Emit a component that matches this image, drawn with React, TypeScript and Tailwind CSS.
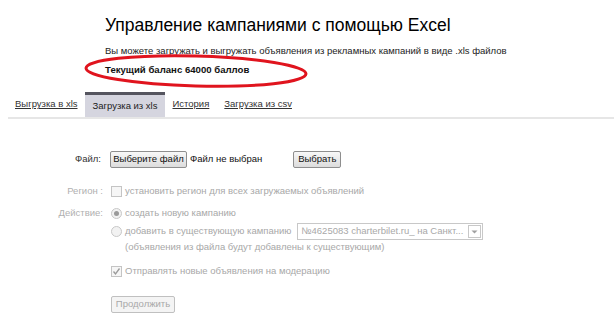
import React from "react";

const Checkbox = ({ checked }: { checked?: boolean }) => (
  <span className="w-[11px] h-[11px] border border-[#c4c4c4] bg-[#f6f6f6] flex items-center justify-center shrink-0">
    {checked && (
      <svg width="9" height="9" viewBox="0 0 9 9">
        <path d="M1.5 4.5 L3.5 7 L7.5 1.5" fill="none" stroke="#9a9a9a" strokeWidth="1.3" />
      </svg>
    )}
  </span>
);

const Radio = ({ checked }: { checked?: boolean }) => (
  <span className="w-[11px] h-[11px] rounded-full border border-[#c8c8c8] bg-[#f2f2f2] flex items-center justify-center shrink-0">
    {checked && <span className="w-[5px] h-[5px] rounded-full bg-[#9a9a9a]" />}
  </span>
);

const App = () => {
  return (
    <div
      className="relative w-[614px] h-[335px] bg-white overflow-hidden text-[#222]"
      style={{ fontFamily: '"Liberation Sans", Arial, sans-serif' }}
    >
      {/* Header */}
      <div className="pl-[105px] pt-[13px]">
        <h1 className="text-[17.5px] leading-[24px] text-black">
          Управление кампаниями с помощью Excel
        </h1>
        <p className="text-[9.5px] leading-[13px] mt-[7px] text-[#222]">
          Вы можете загружать и выгружать объявления из рекламных кампаний в виде .xls файлов
        </p>
        <p className="text-[9.6px] leading-[13px] mt-[6px] font-bold text-[#111]">
          Текущий баланс 64000 баллов
        </p>
      </div>

      {/* Red highlight */}
      <svg className="absolute left-[83px] top-[52px]" width="226" height="40" viewBox="0 0 226 40">
        <ellipse cx="113" cy="19" rx="110" ry="15" fill="none" stroke="#e0141e" strokeWidth="3" transform="rotate(1.5 113 19)" />
      </svg>

      {/* Tabs */}
      <div className="ml-[8px] mt-[16px] pl-[7px] flex items-stretch border-b-2 border-[#e6e6e6] h-[27px] text-[9.5px]">
        <div className="flex items-center">
          <span className="underline text-[#333]">Выгрузка в xls</span>
        </div>
        <div className="ml-[7px] px-[8px] bg-[#d5d5df] border-t-[3px] border-[#55555f] flex items-center text-[#222]">
          Загрузка из xls
        </div>
        <div className="ml-[7px] flex items-center">
          <span className="underline text-[#333]">История</span>
        </div>
        <div className="ml-[15px] flex items-center">
          <span className="underline text-[#333]">Загрузка из csv</span>
        </div>
      </div>

      {/* Form */}
      <div className="mt-[31px] grid grid-cols-[104px_1fr] text-[9.5px]">
        <div className="flex items-center justify-end pr-[3px] h-[18px] text-[#333]">Файл:</div>
        <div className="flex items-center h-[18px] pl-[6px]">
          <button className="h-[17px] w-[77px] border border-[#8e8e8e] rounded-[2px] bg-gradient-to-b from-[#f8f8f8] to-[#dcdcdc] text-[9.5px] text-[#111]">
            Выберите файл
          </button>
          <span className="ml-[3px] text-[#111]">Файл не выбран</span>
          <button className="ml-[31px] h-[17px] w-[48px] border border-[#8e8e8e] rounded-[2px] bg-gradient-to-b from-[#f8f8f8] to-[#dcdcdc] text-[9.5px] text-[#111]">
            Выбрать
          </button>
        </div>

        <div className="mt-[15px] flex items-center justify-end pr-[1px] h-[16px] text-[#b0b0b0]">Регион :</div>
        <div className="mt-[15px] flex items-center gap-[3px] h-[16px] pl-[7px] text-[#a8a8a8]">
          <Checkbox />
          <span>установить регион для всех загружаемых объявлений</span>
        </div>

        <div className="mt-[6px] flex items-center justify-end pr-[1px] h-[16px] text-[#b0b0b0]">Действие:</div>
        <div className="mt-[6px] flex items-center gap-[3px] h-[16px] pl-[7px] text-[#a8a8a8]">
          <Radio checked />
          <span>создать новую кампанию</span>
        </div>

        <div />
        <div className="mt-[2px] flex items-center gap-[3px] h-[17px] pl-[7px] text-[#a8a8a8]">
          <Radio />
          <span>добавить в существующую кампанию</span>
          <div className="ml-[3px] w-[186px] h-[17px] border border-[#c8c8c8] flex items-center text-[#a8a8a8]">
            <span className="flex-1 pl-[3px] whitespace-nowrap overflow-hidden">
              №4625083 charterbilet.ru_ на Санкт...
            </span>
            <span className="w-[13px] h-[13px] mr-[1px] border border-[#c8c8c8] flex items-center justify-center">
              <svg width="7" height="4" viewBox="0 0 7 4">
                <path d="M0.5 0.5 L3.5 3.5 L6.5 0.5Z" fill="#a0a0a0" />
              </svg>
            </span>
          </div>
        </div>

        <div />
        <div className="h-[15px] pl-[21px] flex items-center text-[#a8a8a8]">
          (объявления из файла будут добавлены к существующим)
        </div>

        <div />
        <div className="mt-[8px] flex items-center gap-[3px] h-[16px] pl-[7px] text-[#a8a8a8]">
          <Checkbox checked />
          <span>Отправлять новые объявления на модерацию</span>
        </div>

        <div />
        <div className="mt-[17px] pl-[7px]">
          <button className="h-[17px] w-[64px] border border-[#c0c0c0] rounded-[2px] bg-[#f4f4f4] text-[9.5px] text-[#a8a8a8]">
            Продолжить
          </button>
        </div>
      </div>
    </div>
  );
};

export default App;
